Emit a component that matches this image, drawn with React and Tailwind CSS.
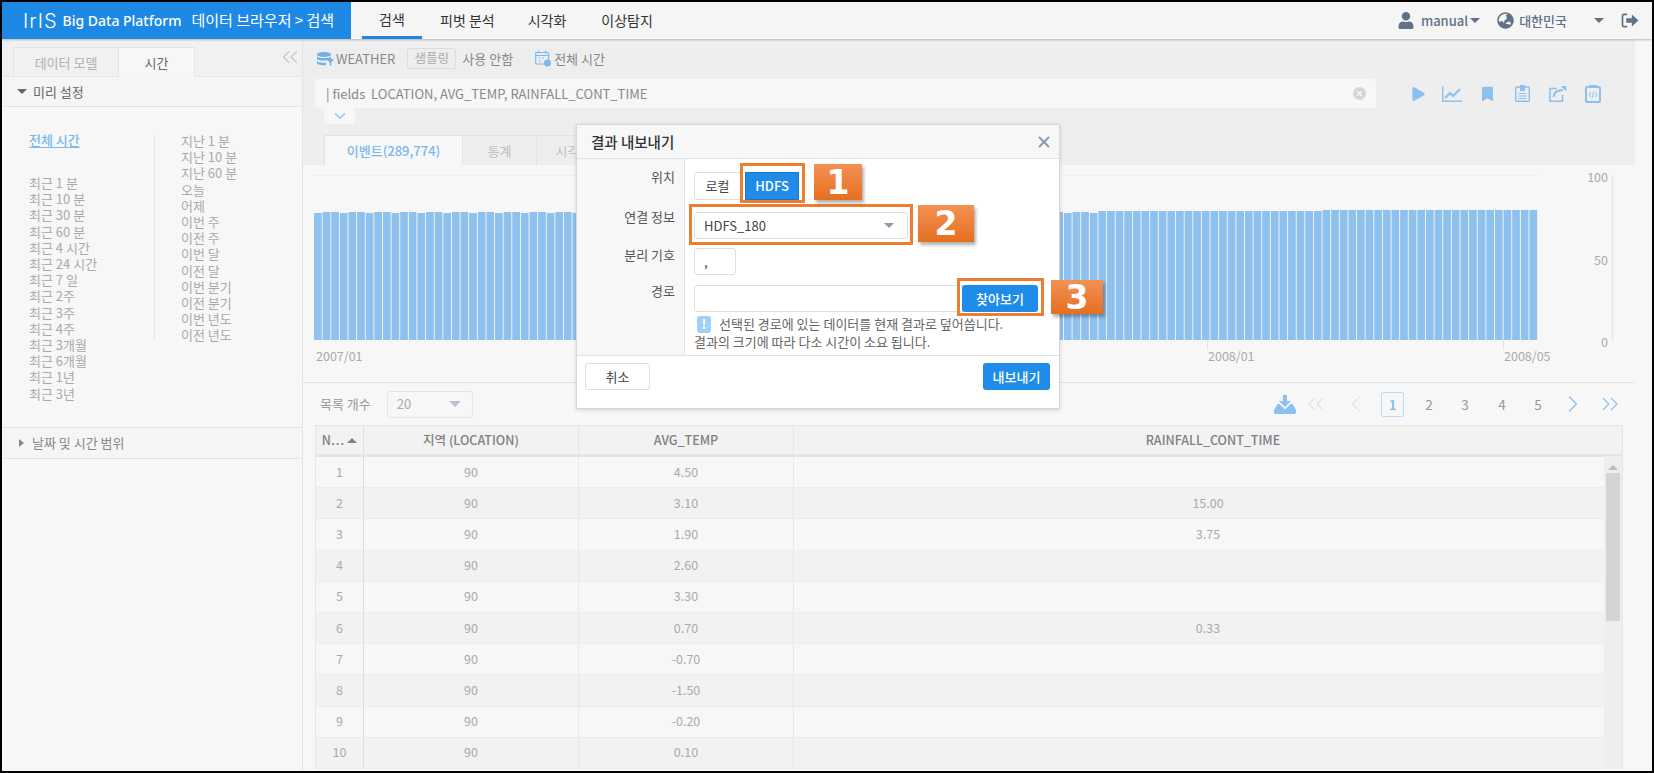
import { ChevronDown, ChevronLeft, ChevronRight, ChevronsLeft, ChevronsRight, X } from 'lucide-react';
import { FaUser, FaGlobeAsia, FaPlay, FaBookmark } from 'react-icons/fa';

const recent = ['최근 1 분', '최근 10 분', '최근 30 분', '최근 60 분', '최근 4 시간', '최근 24 시간', '최근 7 일', '최근 2주', '최근 3주', '최근 4주', '최근 3개월', '최근 6개월', '최근 1년', '최근 3년'];
const past = ['지난 1 분', '지난 10 분', '지난 60 분', '오늘', '어제', '이번 주', '이전 주', '이번 달', '이전 달', '이번 분기', '이전 분기', '이번 년도', '이전 년도'];
const rows = [
  ['1', '90', '4.50', ''],
  ['2', '90', '3.10', '15.00'],
  ['3', '90', '1.90', '3.75'],
  ['4', '90', '2.60', ''],
  ['5', '90', '3.30', ''],
  ['6', '90', '0.70', '0.33'],
  ['7', '90', '-0.70', ''],
  ['8', '90', '-1.50', ''],
  ['9', '90', '-0.20', ''],
  ['10', '90', '0.10', ''],
];
const bars = Array.from({ length: 142 }, (_, i) => i);

function Caret({ className }) {
  return <span className={`inline-block w-0 h-0 border-x-[5px] border-x-transparent border-t-[5px] ${className}`} />;
}

function Chart() {
  return (
    <svg width="1332" height="217" className="block" fontFamily="'Noto Sans CJK KR', sans-serif">
      <line x1="11" y1="10.5" x2="1234" y2="10.5" stroke="#efefef" />
      {bars.map((i) => {
        const x = 11 + i * 8.62;
        const top = i > 116 ? 45 : i > 90 ? 46 : 47 + (i % 3 === 0 ? 1 : 0);
        return <rect key={i} x={x} y={top} width={7.7} height={175 - top} fill="#8fc1ee" />;
      })}
      <line x1="904.5" y1="175" x2="904.5" y2="185" stroke="#dfe4ec" />
      <line x1="1200.5" y1="175" x2="1200.5" y2="185" stroke="#dfe4ec" />
      <line x1="1309.5" y1="10" x2="1309.5" y2="175" stroke="#dfe4ec" strokeWidth="1.5" />
      <g fontSize="12.5" fill="#aaaaaa">
        <text x="13" y="196">2007/01</text>
        <text x="905" y="196">2008/01</text>
        <text x="1201" y="196">2008/05</text>
        <text x="1305" y="17" textAnchor="end">100</text>
        <text x="1305" y="100" textAnchor="end">50</text>
        <text x="1305" y="182" textAnchor="end">0</text>
      </g>
    </svg>
  );
}

function QueryIcons() {
  return (
    <div className="flex items-center text-[#8bc0f0] h-[29px]">
      <FaPlay className="ml-[36px] w-[13px] h-[14px]" />
      <svg viewBox="0 0 20 16" className="ml-[17px] w-[20px] h-[16px]" fill="none" stroke="currentColor">
        <path d="M0.7 0v15.2H20" strokeWidth="1.4" />
        <path d="M3 12l5-5 3 3 7-7" strokeWidth="2.2" />
      </svg>
      <FaBookmark className="ml-[20px] w-[11px] h-[16px]" />
      <svg viewBox="0 0 15 17" className="ml-[22px] w-[15px] h-[17px]" fill="none" stroke="currentColor">
        <rect x="0.7" y="2" width="13.6" height="14.3" rx="1" strokeWidth="1.4" />
        <path d="M5 0h5v6H5z" fill="currentColor" stroke="none" />
        <path d="M3.5 8.5h8M3.5 11h8M3.5 13.5h8" strokeWidth="1" />
      </svg>
      <svg viewBox="0 0 18 17" className="ml-[19px] w-[18px] h-[17px]" fill="none" stroke="currentColor" strokeWidth="1.6">
        <path d="M8 3.5H1v12.7h12.5V10" />
        <path d="M4.5 12C5 7 8.5 5 14 5" strokeWidth="2" />
        <path d="M12 1h5.3v5.5z" fill="currentColor" stroke="none" />
      </svg>
      <svg viewBox="0 0 16 18" className="ml-[18px] w-[16px] h-[18px]" fill="none" stroke="currentColor">
        <rect x="1" y="2" width="14" height="15" rx="1" strokeWidth="2" />
        <path d="M4 0.8h8" strokeWidth="1.6" />
        <path d="M6 7l-2 2.5 2 2.5M10 7l2 2.5-2 2.5M8.8 6.5l-1.6 6" strokeWidth="1" />
      </svg>
    </div>
  );
}

function Sidebar() {
  return (
    <aside className="w-[301px] shrink-0 bg-[#f7f7f7] border-r border-[#e3e3e3] flex flex-col">
      <div className="relative h-[38px] pt-[8px] pl-[11px] flex bg-[#f1f1f1] border-b border-[#e5e5e5]">
        <div className="w-[106px] h-[30px] border border-b-0 border-[#e5e5e5] flex items-center justify-center text-[13px] text-[#b0b0b0]">데이터 모델</div>
        <div className="w-[76px] h-[31px] bg-[#f7f7f7] border-t border-r border-[#e5e5e5] flex items-center justify-center text-[13px] text-[#666]">시간</div>
        <ChevronsLeft size={26} strokeWidth={1} className="absolute right-[-1px] top-[5px] text-[#b8c4d4]" />
      </div>
      <div className="h-[30px] flex items-center pl-[15px] gap-[6px] border-b border-[#e3e3e3] bg-[#f5f5f5] text-[13px] text-[#666]">
        <Caret className="border-t-[#666]" />
        미리 설정
      </div>
      <div className="flex h-[320px] pt-[25px] text-[13px] leading-[16.2px] text-[#aaaaaa]">
        <div className="w-[152px] pl-[27px]">
          <div className="text-[#7ab8ee] font-medium underline underline-offset-2 mt-[-1px] mb-[27px] leading-[17px]">전체 시간</div>
          {recent.map((t) => <div key={t}>{t}</div>)}
        </div>
        <div className="h-[206px] mt-[2px] border-l border-[#e5e5e5] pl-[26px]">
          <div className="-mt-[1px]">
            {past.map((t) => <div key={t}>{t}</div>)}
          </div>
        </div>
      </div>
      <div className="h-[32px] flex items-center pl-[17px] gap-[8px] border-y border-[#e3e3e3] bg-[#f5f5f5] text-[13px] text-[#888]">
        <span className="w-0 h-0 border-y-[4.5px] border-y-transparent border-l-[5px] border-l-[#888]" />
        날짜 및 시간 범위
      </div>
    </aside>
  );
}

function ExportModal() {
  return (
    <div className="absolute left-[574px] top-[122px] w-[484px] h-[285px] bg-white border border-[#d3d8e0] shadow-[0_1px_4px_rgba(0,0,0,0.15)] flex flex-col text-[13px] text-[#555]">
      <div className="h-[34px] shrink-0 bg-[#f7f7f7] border-b border-[#dfe3e9] flex items-center justify-between pl-[14px] pr-[6px]">
        <span className="text-[14.5px] font-medium text-[#333]">결과 내보내기</span>
        <X size={18} strokeWidth={2.6} className="text-[#8a9ab0]" />
      </div>
      <div className="h-[196px] shrink-0 grid grid-cols-[108px_1fr] grid-rows-[46px_37px_36px_77px]">
        <div className="bg-[#f7f7f7] border-r border-[#dfe3e9] text-right pr-[9px] pt-[9px] leading-[18px]">위치</div>
        <div className="pl-[9px] pt-[13px] flex">
          <div className="w-[47px] h-[28px] border border-[#dcdfe4] rounded-l-[3px] flex items-center justify-center text-[#444]">로컬</div>
          <div className="ml-[4px] w-[54px] h-[28px] bg-[#1e8ce8] border border-[#1878c8] flex items-center justify-center text-white font-medium">HDFS</div>
        </div>
        <div className="bg-[#f7f7f7] border-r border-[#dfe3e9] text-right pr-[9px] pt-[3px] leading-[18px]">연결 정보</div>
        <div className="pl-[9px] pt-[7px]">
          <div className="w-[214px] h-[27px] border border-[#dcdfe4] rounded-[3px] flex items-center justify-between pl-[9px] pr-[13px] text-[#444]">
            HDFS_180
            <Caret className="border-t-[#8a9ab0]" />
          </div>
        </div>
        <div className="bg-[#f7f7f7] border-r border-[#dfe3e9] text-right pr-[9px] pt-[4px] leading-[18px]">분리 기호</div>
        <div className="pl-[9px] pt-[6px]">
          <div className="w-[42px] h-[27px] border border-[#dcdfe4] rounded-[3px] flex items-center pl-[9px] text-[#444]">,</div>
        </div>
        <div className="bg-[#f7f7f7] border-r border-[#dfe3e9] text-right pr-[9px] pt-[4px] leading-[18px]">경로</div>
        <div className="pl-[9px] pt-[7px]">
          <div className="flex h-[27px]">
            <div className="w-[270px] border border-[#dcdfe4] rounded-l-[3px]" />
            <div className="-ml-[2px] w-[76px] bg-[#1e8ce8] rounded-[3px] flex items-center justify-center text-white font-medium">찾아보기</div>
          </div>
          <div className="mt-[3px] leading-[18px] text-[#666] whitespace-nowrap">
            <div className="flex items-center pl-[3px]">
              <span className="w-[14px] h-[17px] mr-[8px] rounded-[3px] bg-[#9fd0f7] text-white font-bold flex items-center justify-center">!</span>
              선택된 경로에 있는 데이터를 현재 결과로 덮어씁니다.
            </div>
            <div>결과의 크기에 따라 다소 시간이 소요 됩니다.</div>
          </div>
        </div>
      </div>
      <div className="flex-1 border-t border-[#dfe3e9] flex items-start justify-between pl-[8px] pr-[9px] pt-[7px]">
        <div className="w-[65px] h-[27px] border border-[#dcdfe4] rounded-[3px] flex items-center justify-center text-[#444]">취소</div>
        <div className="w-[67px] h-[27px] bg-[#1e8ce8] rounded-[3px] flex items-center justify-center text-white font-medium">내보내기</div>
      </div>

      {/* callouts */}
      <div className="absolute left-[163px] top-[38px] w-[65px] h-[40px] border-[3px] border-[#ed7d31]" />
      <div className="absolute left-[112px] top-[79px] w-[224px] h-[41px] border-[3px] border-[#ed7d31]" />
      <div className="absolute left-[380px] top-[153px] w-[87px] h-[38px] border-[3px] border-[#ed7d31]" />
      <Badge n="1" className="left-[237px] top-[39px] w-[48px] h-[36px]" />
      <Badge n="2" className="left-[341px] top-[80px] w-[56px] h-[37px]" />
      <Badge n="3" className="left-[474px] top-[155px] w-[52px] h-[34px]" />
    </div>
  );
}

function Badge({ n, className }) {
  return (
    <div className={`absolute ${className} bg-gradient-to-b from-[#f39153] to-[#e56f1c] shadow-[2px_3px_3px_rgba(0,0,0,0.3)] flex items-center justify-center text-white text-[33px] font-bold leading-none font-['DejaVu_Sans',sans-serif]`}>
      {n}
    </div>
  );
}

function ResultTable() {
  return (
    <div className="relative ml-[12px] w-[1308px] border-x border-[#e5e5e5] text-[12.5px]">
      <div className="flex h-[32px] bg-[#f2f2f2] border-y border-b-[3px] border-[#e5e5e5] text-[#808080] font-medium">
        <div className="w-[48px] flex items-center justify-center gap-[3px] border-r border-[#e0e0e0]">
          N⋯ <Caret className="rotate-180 border-t-[#808080]" />
        </div>
        <div className="w-[215px] flex items-center justify-center border-r border-[#e5e5e5]">지역 (LOCATION)</div>
        <div className="w-[215px] flex items-center justify-center border-r border-[#e5e5e5]">AVG_TEMP</div>
        <div className="flex-1 flex items-center justify-center pl-[10px]">RAINFALL_CONT_TIME</div>
      </div>
      {rows.map((r, i) => (
        <div key={r[0]} className={`flex h-[31.2px] border-b border-[#ececec] text-[#aaaaaa] ${i % 2 ? 'bg-[#f2f2f2]' : 'bg-[#f7f7f7]'}`}>
          <div className="w-[48px] flex items-center justify-center border-r border-[#dcdcdc]">{r[0]}</div>
          <div className="w-[215px] flex items-center justify-center border-r border-[#e8e8e8]">{r[1]}</div>
          <div className="w-[215px] flex items-center justify-center border-r border-[#e8e8e8]">{r[2]}</div>
          <div className="flex-1 flex items-center justify-center">{r[3]}</div>
        </div>
      ))}
      {/* scrollbar */}
      <div className="absolute right-0 top-[31px] bottom-0 w-[18px] bg-[#eeeeee] flex flex-col items-center">
        <Caret className="rotate-180 mt-[9px] border-t-[#bbbbbb]" />
        <div className="mt-[3px] w-[14px] h-[148px] bg-[#d4d4d4]" />
      </div>
    </div>
  );
}

export default function App() {
  return (
    <div className="relative w-[1654px] h-[773px] border-2 border-black bg-[#f7f7f7] overflow-hidden flex flex-col font-['Noto_Sans_CJK_KR','Noto_Sans',sans-serif]">
      <header className="relative z-10 h-[37px] shrink-0 flex items-center bg-[#f5f5f5] shadow-[0_1px_2px_rgba(0,0,0,0.25)]">
        <div className="w-[349px] h-full bg-[#1e88e5] flex items-center pl-[21px] text-white whitespace-nowrap">
          <span className="font-['Inter',sans-serif] font-light text-[20px] tracking-[1px] leading-none">IrIS</span>
          <span className="ml-[5px] text-[14px] font-medium font-['Noto_Sans',sans-serif]">Big Data Platform</span>
          <span className="ml-[10px] text-[15px]">데이터 브라우저 &gt; 검색</span>
        </div>
        <nav className="flex h-full text-[14px] text-[#333]">
          <div className="flex items-center justify-center ml-[11px] w-[60px] border-b-[3px] border-[#1e88e5]">검색</div>
          <div className="flex items-center ml-[18px]">피벗 분석</div>
          <div className="flex items-center ml-[33px]">시각화</div>
          <div className="flex items-center ml-[35px]">이상탐지</div>
        </nav>
        <div className="ml-auto flex items-center text-[#5f7286] text-[13px] font-medium pr-[13px]">
          <FaUser className="w-[16px] h-[17px]" />
          <span className="ml-[7px]">manual</span>
          <Caret className="ml-[2px] border-t-[#5f7286]" />
          <FaGlobeAsia className="ml-[17px] w-[17px] h-[17px]" />
          <span className="ml-[5px]">대한민국</span>
          <Caret className="ml-[27px] border-t-[#5f7286]" />
          <svg viewBox="0 0 18 16" className="ml-[17px] w-[18px] h-[15px]" fill="currentColor">
            <path d="M6 1.5H2.5a1.5 1.5 0 0 0-1.5 1.5v10a1.5 1.5 0 0 0 1.5 1.5H6" fill="none" stroke="currentColor" strokeWidth="1.8" />
            <path d="M5 5.5h6V1.5l7 6.5-7 6.500v-4H5z" />
          </svg>
        </div>
      </header>

      <div className="flex flex-1 min-h-0">
        <Sidebar />
        <main className="flex-1 min-w-0">
          <section className="h-[126px] mr-[17px] bg-[#eeeeee] pl-[12px] relative">
            <div className="flex items-center h-[40px] pb-[1px] pl-[2px] text-[13px] text-[#888]">
              <svg viewBox="0 0 17 14" className="w-[17px] h-[14px] text-[#6fb1e8]" fill="currentColor">
                <ellipse cx="7" cy="2.5" rx="7" ry="2.5" />
                <path d="M0 4.5c2 2 12 2 14 0v2.5c-2 2-12 2-14 0zM0 9c2 2 7 2 9 1.8V13c-3 .5-8 0-9-1.5z" />
                <path d="M10 7h7l-2.7 3.2V14l-1.6-1v-2.8z" />
              </svg>
              <span className="ml-[2px]">WEATHER</span>
              <span className="ml-[12px] w-[49px] h-[21px] border border-[#dcdcdc] rounded-[3px] flex items-center justify-center text-[#aaa] text-[12.5px]">샘플링</span>
              <span className="ml-[6px]">사용 안함</span>
              <svg viewBox="0 0 17 17" className="ml-[22px] w-[17px] h-[17px] text-[#7ab8ee]" fill="none" stroke="currentColor" strokeWidth="1.2">
                <rect x="0.7" y="2.5" width="13" height="11.5" rx="1" />
                <path d="M0.7 5.5h13M3.5 0.5v3M10.5 0.5v3M3.5 8h2M7 8h2M3.5 11h2" />
                <circle cx="12.5" cy="13" r="3.5" fill="currentColor" stroke="none" />
              </svg>
              <span className="ml-[2px]">전체 시간</span>
            </div>
            <div className="flex">
              <div className="w-[1061px] h-[29px] bg-[#f7f7f7] rounded-[2px] flex items-center justify-between pl-[11px] pr-[10px] text-[13px] text-[#888]">
                <span className="whitespace-pre">| fields  LOCATION, AVG_TEMP, RAINFALL_CONT_TIME</span>
                <span className="w-[13px] h-[13px] rounded-full bg-[#d2d6da] flex items-center justify-center">
                  <X size={9} strokeWidth={3} className="text-[#f7f7f7]" />
                </span>
              </div>
              <QueryIcons />
            </div>
            <div className="ml-[9px] w-[31px] h-[16px] bg-[#f7f7f7] rounded-b-[3px] flex items-center justify-center">
              <ChevronDown size={18} strokeWidth={1.6} className="text-[#8bc0f0]" />
            </div>
            <div className="absolute left-[21px] bottom-0 flex text-[13px] h-[30px]">
              <div className="w-[139px] bg-[#f7f7f7] border-t border-x border-[#e3e3e3] flex items-center justify-center text-[#7ab8ee] font-medium">이벤트(289,774)</div>
              <div className="w-[74px] border-t border-r border-[#e3e3e3] flex items-center justify-center text-[#c0c0c0]">통계</div>
              <div className="w-[74px] border-t border-r border-[#e3e3e3] flex items-center justify-center text-[#c0c0c0]">시각화</div>
            </div>
          </section>
          <section className="mr-[17px] border-b border-[#e3e3e3]">
            <Chart />
          </section>
          <div className="h-[42px] flex items-center pl-[17px] pr-[28px] text-[13px] text-[#999]">
            <span>목록 개수</span>
            <div className="ml-[16px] w-[86px] h-[27px] border border-[#e5e5e5] rounded-[3px] flex items-center justify-between pl-[9px] pr-[11px] text-[#aaa]">
              20
              <Caret className="border-t-[#b8c4d0] border-x-[6px] border-t-[6px]" />
            </div>
            <div className="ml-auto flex items-center text-[13.5px] text-[#999]">
              <svg viewBox="0 0 22 19" className="w-[22px] h-[19px] text-[#8bc0f0]" fill="currentColor">
                <path d="M9 0h4v6h4l-6 6-6-6h4z" />
                <path d="M3.5 9H5.5l5.5 5.5L16.5 9h2L22 15v2.5a1.5 1.5 0 0 1-1.5 1.5h-19A1.5 1.5 0 0 1 0 17.5V15z" />
              </svg>
              <ChevronsLeft size={28} strokeWidth={1} className="ml-[6px] text-[#dfe3e8]" />
              <ChevronLeft size={28} strokeWidth={1} className="ml-[12px] text-[#dfe3e8]" />
              <div className="ml-[11px] w-[23px] h-[25px] border border-[#bcdcf7] rounded-[2px] flex items-center justify-center text-[#7ab8ee] font-medium">1</div>
              <div className="w-[14px] ml-[18px] text-center">2</div>
              <div className="w-[14px] ml-[22px] text-center">3</div>
              <div className="w-[14px] ml-[23px] text-center">4</div>
              <div className="w-[14px] ml-[22px] text-center">5</div>
              <ChevronRight size={28} strokeWidth={1.1} className="ml-[14px] text-[#8bc0f0]" />
              <ChevronsRight size={28} strokeWidth={1.1} className="ml-[9px] text-[#8bc0f0]" />
            </div>
          </div>
          <ResultTable />
        </main>
      </div>

      <ExportModal />
    </div>
  );
}
